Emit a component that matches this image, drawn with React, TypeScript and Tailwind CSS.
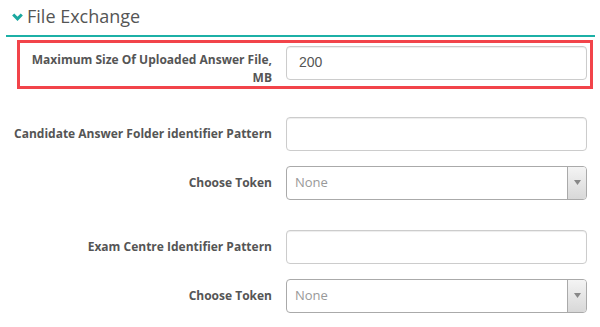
import React from "react";

function Label({ children, className = "" }: { children: React.ReactNode; className?: string }) {
  return (
    <div
      className={`text-right text-[12px] font-bold leading-[17px] text-[#555] ${className}`}
    >
      {children}
    </div>
  );
}

function TextInput({ value = "" }: { value?: string }) {
  return (
    <div className="flex h-[34px] w-[301px] items-center rounded-[4px] border border-[#ccc] bg-white px-[12px] text-[14px] text-[#555] shadow-[inset_0_1px_1px_rgba(0,0,0,0.075)]">
      <span style={{ fontFamily: "Arial, 'Liberation Sans', sans-serif" }}>{value}</span>
    </div>
  );
}

function Select() {
  return (
    <div className="flex h-[34px] w-[301px] items-stretch overflow-hidden rounded-[4px] border border-[#aaa] bg-white">
      <div className="flex flex-1 items-center pl-[8px] text-[13px] text-[#999]">None</div>
      <div className="flex w-[19px] items-center justify-center border-l border-[#aaa] bg-gradient-to-b from-[#f4f4f4] to-[#d8d8d8]">
        <svg width="7" height="5" viewBox="0 0 7 5">
          <path d="M0 0 L7 0 L3.5 5 Z" fill="#888" />
        </svg>
      </div>
    </div>
  );
}

export default function App() {
  return (
    <div
      className="relative h-[327px] w-[600px] overflow-hidden bg-white"
      style={{ fontFamily: "'Open Sans', 'Noto Sans', sans-serif" }}
    >
      <div className="flex h-[35px] items-center pl-[12px] pb-[3px]">
        <svg width="11" height="8" viewBox="0 0 11 8" className="mr-[4px] mt-[1px]">
          <path d="M1.2 1.5 L5.5 5.8 L9.8 1.5" stroke="#1aa8a0" strokeWidth="3" fill="none" />
        </svg>
        <span className="text-[18px] leading-none text-[#555]">File Exchange</span>
      </div>
      <div className="ml-[6px] h-[1.5px] w-[589px] bg-[#1cb0a6]" />
      <div className="ml-[17px] mt-[3px] flex h-[49px] w-[576px] border-[3px] border-[#f2444a] pt-[3px]">
        <Label className="w-[252px] pt-[5px] leading-[18px]">
          Maximum Size Of Uploaded Answer File,
          <br />
          MB
        </Label>
        <div className="ml-[14px]">
          <TextInput value="200" />
        </div>
      </div>

      <div className="mt-[28px] flex items-center">
        <Label className="w-[272px]">Candidate Answer Folder identifier Pattern</Label>
        <div className="ml-[14px]">
          <TextInput />
        </div>
      </div>
      <div className="mt-[15px] flex items-center">
        <Label className="w-[272px]">Choose Token</Label>
        <div className="ml-[14px]">
          <Select />
        </div>
      </div>

      <div className="mt-[30px] flex items-center">
        <Label className="w-[272px]">Exam Centre Identifier Pattern</Label>
        <div className="ml-[14px]">
          <TextInput />
        </div>
      </div>
      <div className="mt-[15px] flex items-center">
        <Label className="w-[272px]">Choose Token</Label>
        <div className="ml-[14px]">
          <Select />
        </div>
      </div>
    </div>
  );
}
